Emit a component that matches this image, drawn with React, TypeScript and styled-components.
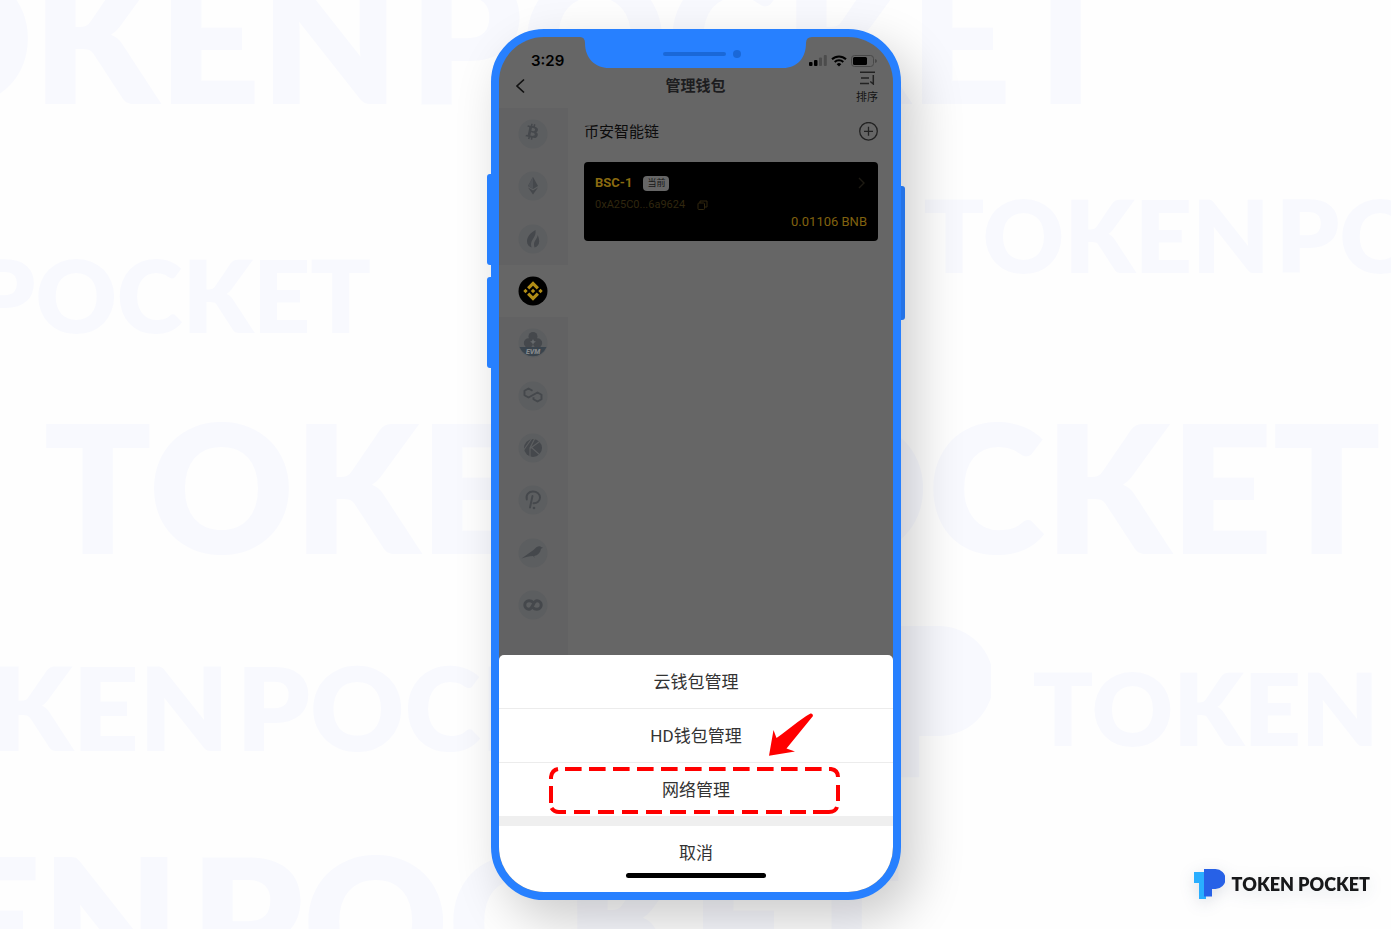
import React from 'react';
import styled, { createGlobalStyle } from 'styled-components';
import { FaBtc } from 'react-icons/fa';

const GlobalStyle = createGlobalStyle`
  *, *::before, *::after { box-sizing: border-box; }
  body {
    margin: 0;
    background: #fefefe;
    font-family: Roboto, "Noto Sans CJK SC", sans-serif;
  }
  button { font: inherit; color: inherit; background: none; border: 0; padding: 0; margin: 0; cursor: pointer; }
  svg { display: block; }
  h1, h2, h3, p, ul { margin: 0; padding: 0; font-weight: 400; list-style: none; }
`;

const Page = styled.div`
  position: relative;
  display: flex;
  justify-content: center;
  align-items: center;
  min-height: 100vh;
  padding: 29px 0 29px 1px;
  overflow: hidden;
`;

/* Backdrop wordmarks */
const Backdrop = styled.div`
  position: absolute;
  inset: 0;
  overflow: hidden;
  color: #f8f9fe;
  pointer-events: none;
`;

const Wordmark = styled.div<{ $x: number; $y: number; $size: number; $gap: number }>`
  position: absolute;
  left: calc(50% + ${(p) => p.$x}px);
  top: ${(p) => p.$y}px;
  display: flex;
  gap: ${(p) => p.$gap}px;
  font-family: Lato, sans-serif;
  font-weight: 800;
  font-size: ${(p) => p.$size}px;
  line-height: 1;
  white-space: nowrap;
`;

const BackdropLogo = styled.svg`
  position: absolute;
  left: calc(50% + 124px);
  top: 626px;
`;

/* Phone */
const Phone = styled.main`
  position: relative;
  width: 410px;
  border: 8px solid #2780ff;
  border-radius: 53px;
  background: #2780ff;
  box-shadow: 14px 20px 50px rgba(0, 0, 0, 0.2);
`;

const SideKey = styled.span<{ $side: 'left' | 'right'; $top: number; $height: number }>`
  position: absolute;
  ${(p) => p.$side}: -12px;
  top: ${(p) => p.$top}px;
  width: 4px;
  height: ${(p) => p.$height}px;
  border-radius: ${(p) => (p.$side === 'left' ? '3px 0 0 3px' : '0 3px 3px 0')};
  background: ${(p) => (p.$side === 'left' ? '#2780ff' : '#2573e6')};
`;

const Notch = styled.svg`
  position: absolute;
  top: -1px;
  left: 81px;
`;

const Screen = styled.div`
  display: flex;
  flex-direction: column;
  border-radius: 45px;
  overflow: hidden;
  background: #666;
  color: #141414;
`;

const StatusBar = styled.div`
  display: flex;
  justify-content: space-between;
  align-items: flex-end;
  height: 34px;
  padding: 0 16px 0 32px;
  color: #000;
`;

const Clock = styled.time`
  font: 600 15px/20px Inter, sans-serif;
`;

const StatusIcons = styled.div`
  display: flex;
  align-items: center;
  gap: 4px;
  height: 20px;
`;

const Header = styled.header`
  display: grid;
  grid-template-columns: 40px 1fr 40px;
  align-items: start;
  height: 37px;
  padding: 0 15px 0 14px;
`;

const BackButton = styled.button`
  width: 16px;
  height: 30px;
  padding-left: 2px;
`;

const Title = styled.h1`
  font-size: 15px;
  line-height: 30px;
  font-weight: 700;
  text-align: center;
  color: #1d1d1f;
`;

const SortButton = styled.button`
  display: flex;
  flex-direction: column;
  align-items: center;
  justify-self: end;
  gap: 5px;
  font-size: 11px;
  line-height: 16px;
`;

const Body = styled.div`
  display: flex;
`;

const Sidebar = styled.nav`
  width: 69px;
  padding-bottom: 24px;
  background: #626263;
`;

const ChainList = styled.ul`
  display: grid;
  grid-auto-rows: 1fr;
  height: 523px;
`;

const ChainItem = styled.li<{ $active?: boolean }>`
  display: flex;
  align-items: center;
  justify-content: center;
  padding-right: 1px;
  background: ${(p) => (p.$active ? '#666' : 'transparent')};
`;

const Wallets = styled.section`
  flex: 1;
  padding: 12px 15px 0 16px;
`;

const WalletsHead = styled.div`
  display: flex;
  align-items: center;
  justify-content: space-between;
  height: 24px;
  margin-bottom: 18px;
`;

const ChainName = styled.h2`
  font-size: 15px;
  line-height: 24px;
  color: #0c0c0c;
`;

const Card = styled.article`
  height: 79px;
  padding: 12px 11px 0;
  border-radius: 4px;
  background: #000;
`;

const CardTop = styled.div`
  display: flex;
  align-items: center;
  height: 18px;
`;

const WalletName = styled.h3`
  font-size: 13px;
  line-height: 18px;
  font-weight: 700;
  color: #8a6a10;
`;

const Badge = styled.span`
  margin: 0 auto 0 11px;
  padding: 0 4px;
  border-radius: 4px;
  background: #666;
  color: #161616;
  font-size: 9px;
  line-height: 15px;
`;

const Address = styled.p`
  display: flex;
  align-items: center;
  gap: 12px;
  font-size: 11px;
  line-height: 14px;
  margin-top: 6px;
  color: #30270f;
`;

const Balance = styled.p`
  font-size: 13px;
  line-height: 18px;
  margin-top: 1px;
  text-align: right;
  color: #80620f;
`;

/* Action sheet */
const Sheet = styled.div`
  position: relative;
  padding-bottom: 14px;
  border-radius: 5px 5px 0 0;
  background: #fff;
  color: #333;
`;

const SheetButton = styled.button<{ $last?: boolean }>`
  display: block;
  width: 100%;
  height: ${(p) => (p.$last ? 53 : 54)}px;
  border-bottom: ${(p) => (p.$last ? '0' : '1px solid #ececec')};
  padding-top: 1px;
  font-size: 17px;
  line-height: 24px;
  text-align: center;
`;

const Divider = styled.hr`
  height: 10px;
  margin: 0;
  border: 0;
  background: #efefef;
`;

const CancelButton = styled(SheetButton)`
  height: 47px;
  padding-top: 7px;
`;

const HomeBar = styled.div`
  width: 140px;
  height: 5px;
  margin: 0 auto;
  border-radius: 3px;
  background: #000;
`;

const Callout = styled.svg`
  position: absolute;
  left: 50px;
  top: 55px;
  pointer-events: none;
`;

const Brand = styled.footer`
  position: absolute;
  right: 21px;
  bottom: 30px;
  display: flex;
  align-items: center;
  gap: 7px;
  color: #17181a;
  font: 800 18px/30px Lato, sans-serif;
  white-space: nowrap;
  filter: drop-shadow(0 4px 8px rgba(30, 50, 90, 0.15));
`;

const T_SHAPE = 'M0 3h12v27H5V14H0z';
const P_SHAPE = 'M10 0h11.500a9.500 9.500 0 0 1 0 20H18v7.500h-8z';

const BrandLogo = () => (
  <svg width="31" height="30" viewBox="0 0 31 30">
    <path d={T_SHAPE} fill="#29aeff" />
    <path d={P_SHAPE} fill="#2761e7" />
  </svg>
);

const marks = [
  { x: -913, y: -54, size: 178, gap: 10 },
  { x: -1076, y: 244, size: 100, gap: 6 },
  { x: 228, y: 184, size: 100, gap: 6 },
  { x: -652, y: 396, size: 178, gap: 10 },
  { x: -868, y: 649, size: 116, gap: 7 },
  { x: 337, y: 657, size: 100, gap: 6 },
  { x: -1132, y: 829, size: 178, gap: 10 },
];

const Disc = ({ children }: { children: React.ReactNode }) => (
  <svg width="30" height="30" viewBox="0 0 30 30">
    <circle cx="15" cy="15" r="14.500" fill="#5c5e60" />
    {children}
  </svg>
);

const INK = '#45484c';

const chains: { name: string; active?: boolean; icon: React.ReactNode }[] = [
  {
    name: 'Bitcoin',
    icon: (
      <Disc>
        <g transform="rotate(12 15 15)" color={INK}>
          <FaBtc x="6" y="5" width="19" height="19" />
        </g>
      </Disc>
    ),
  },
  {
    name: 'Ethereum',
    icon: (
      <Disc>
        <path d="M15 6l5 9-5 3-5-3z" fill={INK} />
        <path d="M10 16.500l5 3 5-3-5 7z" fill={INK} />
        <path d="M15 6v12l-5-3z" fill="#505357" />
      </Disc>
    ),
  },
  {
    name: 'Heco',
    icon: (
      <Disc>
        <path d="M17.500 6C12 9 9 13 9 17.500c0 3 1.800 5 4.500 6-1-3.500-.5-5.500 1.500-8.500 2-3 3-5.500 2.500-9z" fill={INK} />
        <path d="M19.500 11c.5 3-3.500 5.500-3.500 9.500 0 1 .2 2 .5 3 3-.8 4.700-3 4.700-6 0-2.500-.7-5-1.700-6.500z" fill={INK} />
      </Disc>
    ),
  },
  {
    name: 'BSC',
    active: true,
    icon: (
      <svg width="30" height="30" viewBox="0 0 30 30">
        <circle cx="15" cy="15" r="14.500" fill="#000" />
        <path
          transform="translate(5.300 5.300) scale(.81)"
          fill="#b18d16"
          d="M16.624 13.920l2.717 2.715-7.353 7.353-7.353-7.352 2.718-2.716 4.635 4.659 4.636-4.659zm4.637-4.636L24 12l-2.715 2.716L18.568 12l2.693-2.716zm-9.272 0l2.716 2.692-2.716 2.717L9.272 12l2.717-2.715zm-9.273 0L5.409 12l-2.692 2.692L0 12l2.716-2.716zM11.989.011l7.353 7.330-2.718 2.715-4.635-4.636-4.636 4.660-2.717-2.716z"
        />
      </svg>
    ),
  },
  {
    name: 'EVM',
    icon: (
      <Disc>
        <circle cx="15" cy="8.500" r="4.500" fill={INK} />
        <circle cx="10.500" cy="15" r="4.700" fill={INK} />
        <circle cx="19.500" cy="15" r="4.700" fill={INK} />
        <path d="M15 11l1 2 2 .8-2 1-1 2-1-2-2-1 2-.8z" fill="#66696c" />
        <path d="M1.500 19h27a14.500 14.500 0 0 1-27 0z" fill="#3a444d" />
        <text x="15" y="26" fontSize="7" fontWeight="900" fontStyle="italic" textAnchor="middle" fill="#85888b">EVM</text>
      </Disc>
    ),
  },
  {
    name: 'Polygon',
    icon: (
      <Disc>
        <path
          d="M14.500 9.800l-4-2.300-4 2.300v4.400l4 2.300 9-5 4 2.300v4.400l-4 2.300-4-2.300v-2"
          fill="none" stroke={INK} strokeWidth="1.900" strokeLinejoin="round"
        />
      </Disc>
    ),
  },
  {
    name: 'Klaytn',
    icon: (
      <Disc>
        <circle cx="15" cy="15" r="9" fill={INK} />
        <path d="M12 24.500V15L17 5M12 15.500L23 7.500M13.500 14.500l9 8M5 18L13.500 6" stroke="#5c5e60" strokeWidth="1.200" fill="none" />
      </Disc>
    ),
  },
  {
    name: 'Polkadot',
    icon: (
      <Disc>
        <path d="M8.800 14.500C7.500 9.500 11 6.500 15 6.500c4 0 7 2.500 7 6s-3 6-6.500 5.800M14.500 11L12 22.500" fill="none" stroke={INK} strokeWidth="1.900" strokeLinecap="round" />
        <circle cx="16" cy="23" r="1.300" fill={INK} />
      </Disc>
    ),
  },
  {
    name: 'Kusama',
    icon: (
      <Disc>
        <path d="M3.500 20.500l12-8.500c2-1.500 3-3.500 5.500-3.700 1-.3 1.700 0 2 .7l2 .8-2 .9c-.5 4-3 6.500-7 7.300l1 2-2-1.900c-4 0-7 1-11.500 2.400z" fill={INK} />
      </Disc>
    ),
  },
  {
    name: 'Boba',
    icon: (
      <Disc>
        <path d="M15 12.200C13.800 11 12.500 10.800 11 10.800a4.200 4.200 0 0 0 0 8.400c4 0 4-8.400 8-8.400a4.200 4.200 0 0 1 0 8.400c-1.500 0-2.800-.2-4-1.400" fill="none" stroke={INK} strokeWidth="3" />
      </Disc>
    ),
  },
];

export default function App() {
  return (
    <>
      <GlobalStyle />
      <Page>
        <Backdrop aria-hidden="true">
          {marks.map((m) => (
            <Wordmark key={`${m.x}-${m.y}`} $x={m.x} $y={m.y} $size={m.size} $gap={m.gap}>
              <span>TOKEN</span>
              <span>POCKET</span>
            </Wordmark>
          ))}
          <BackdropLogo width="171" height="165" viewBox="0 0 31 30">
            <path d={T_SHAPE + P_SHAPE} fill="#f8f9fe" />
          </BackdropLogo>
        </Backdrop>

        <Phone>
          <SideKey $side="left" $top={137} $height={91} />
          <SideKey $side="left" $top={240} $height={91} />
          <SideKey $side="right" $top={149} $height={134} />
          <Screen>
            <StatusBar>
              <Clock>3:29</Clock>
              <StatusIcons>
                <svg width="18" height="12" viewBox="0 0 18 12">
                  <rect x="0" y="7" width="3.500" height="4" rx="1" />
                  <rect x="5" y="5" width="3.500" height="6" rx="1" />
                  <rect x="10" y="2.500" width="3" height="8.500" rx="1" fill="#4c4c4c" />
                  <rect x="14.800" y="0" width="3" height="11" rx="1" fill="#4c4c4c" />
                </svg>
                <svg width="16" height="12" viewBox="0 0 16 12" fill="none" stroke="#000" strokeWidth="2">
                  <path d="M1 4.300a10 10 0 0 1 14 0M3.700 7a6.200 6.200 0 0 1 8.600 0" />
                  <path d="M8 11.500L5.700 9.200a3.300 3.300 0 0 1 4.600 0z" fill="#000" stroke="none" />
                </svg>
                <svg width="26" height="12" viewBox="0 0 26 12">
                  <rect x=".5" y=".5" width="22" height="11" rx="3" fill="none" stroke="#484848" />
                  <rect x="2" y="2" width="14" height="8" rx="1.500" />
                  <path d="M24 4q2 .5 2 2t-2 2z" fill="#484848" />
                </svg>
              </StatusIcons>
            </StatusBar>

            <Header>
              <BackButton aria-label="返回">
                <svg width="10" height="16" viewBox="0 0 10 16">
                  <path d="M9 1.500L2 8l7 6.500" fill="none" stroke="#111" strokeWidth="1.700" />
                </svg>
              </BackButton>
              <Title>管理钱包</Title>
              <SortButton>
                <svg width="17" height="14" viewBox="0 0 17 14" fill="none" stroke="#222" strokeWidth="1.500">
                  <path d="M1 1.200h15M2 7h8M1 12.500h9M14.300 4v9l-3-2.500" />
                </svg>
                排序
              </SortButton>
            </Header>

            <Body>
              <Sidebar>
                <ChainList>
                  {chains.map((c) => (
                    <ChainItem key={c.name} $active={c.active}>
                      <button aria-label={c.name}>{c.icon}</button>
                    </ChainItem>
                  ))}
                </ChainList>
              </Sidebar>
              <Wallets>
                <WalletsHead>
                  <ChainName>币安智能链</ChainName>
                  <button aria-label="添加钱包">
                    <svg width="20" height="20" viewBox="0 0 20 20" fill="none" stroke="#222" strokeWidth="1.300">
                      <circle cx="10.500" cy="9.300" r="8.800" />
                      <path d="M10.500 4.800v9M6 9.300h9" />
                    </svg>
                  </button>
                </WalletsHead>
                <Card>
                  <CardTop>
                    <WalletName>BSC-1</WalletName>
                    <Badge>当前</Badge>
                    <svg width="10" height="12" viewBox="0 0 10 12">
                      <path d="M2 1l5 5-5 5" fill="none" stroke="#1d1a12" strokeWidth="1.400" />
                    </svg>
                  </CardTop>
                  <Address>
                    0xA25C0...6a9624
                    <svg width="11" height="10" viewBox="0 0 11 10" fill="none" stroke="#30270f">
                      <rect x="1" y="3" width="6.500" height="6.500" rx="1" />
                      <path d="M3 3V1h7v6H7.500" />
                    </svg>
                  </Address>
                  <Balance>0.01106 BNB</Balance>
                </Card>
              </Wallets>
            </Body>

            <Sheet role="dialog" aria-label="钱包管理">
              <SheetButton>云钱包管理</SheetButton>
              <SheetButton>HD钱包管理</SheetButton>
              <SheetButton $last>网络管理</SheetButton>
              <Divider />
              <CancelButton $last>取消</CancelButton>
              <HomeBar />
              <Callout width="292" height="106" viewBox="0 0 292 106">
                <path
                  d="M220 45.700L224.500 20l3 8C239 20 250 10 261.500 3.500q2.500-.5 2.500 2.500L237.500 38.500l8.500 3z"
                  fill="#ff0000"
                />
                <g fill="none" stroke="#ff0000" strokeWidth="4">
                  <path d="M16 59H280" strokeDasharray="16.600 7.400" />
                  <path d="M280 59h2q7 1 7 8" />
                  <path d="M289 75v16" />
                  <path d="M288 97q-1.500 5-8 5h-16" />
                  <path d="M257 102H20" strokeDasharray="16 8" />
                  <path d="M17 102h-7q-5 0-7.500-4" />
                  <path d="M2 93V76" />
                  <path d="M2 69v-2q1-7 7-8" />
                </g>
              </Callout>
            </Sheet>
          </Screen>
          <Notch width="232" height="32" viewBox="0 0 232 32">
            <path d="M0 0v1q5 0 5 6C5 22 15 32 29 32H203C217 32 226 22 226 7q0-6 6-6V0z" fill="#2780ff" />
            <rect x="83" y="16" width="63" height="4" rx="2" fill="#1a68d8" />
            <circle cx="157" cy="18" r="4" fill="#1a68d8" />
          </Notch>
        </Phone>

        <Brand>
          <BrandLogo />
          <span>TOKEN POCKET</span>
        </Brand>
      </Page>
    </>
  );
}
